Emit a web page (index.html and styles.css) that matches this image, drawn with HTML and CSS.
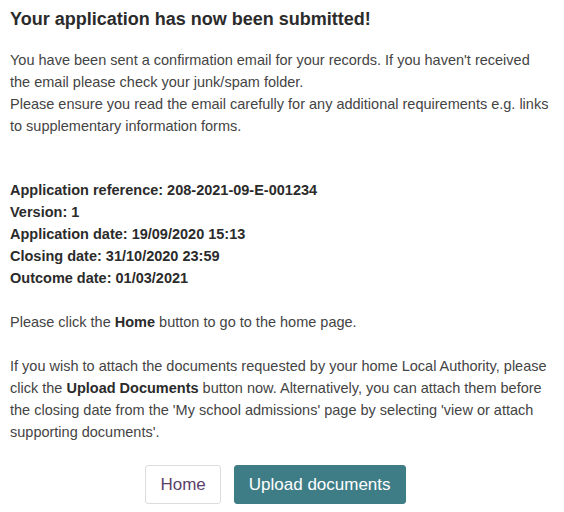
FILE: index.html
```html
<!DOCTYPE html>
<html>
<head>
<meta charset="utf-8">
<link rel="stylesheet" href="styles.css">
</head>
<body>
<div class="page">
  <h1 class="title">Your application has now been submitted!</h1>
  <p class="text">You have been sent a confirmation email for your records. If you haven't received the email please check your junk/spam folder.<br>Please ensure you read the email carefully for any additional requirements e.g. links to supplementary information forms.</p>
  <div class="details">
    <div>Application reference: 208-2021-09-E-001234</div>
    <div>Version: 1</div>
    <div>Application date: 19/09/2020 15:13</div>
    <div>Closing date: 31/10/2020 23:59</div>
    <div>Outcome date: 01/03/2021</div>
  </div>
  <p class="text">Please click the <b>Home</b> button to go to the home page.</p>
  <p class="text">If you wish to attach the documents requested by your home Local Authority, please click the <b>Upload Documents</b> button now. Alternatively, you can attach them before the closing date from the 'My school admissions' page by selecting 'view or attach supporting documents'.</p>
  <div class="actions">
    <button class="btn btn-home">Home</button>
    <button class="btn btn-upload">Upload documents</button>
  </div>
</div>
</body>
</html>
```

FILE: styles.css
```css
html, body {
  margin: 0;
  padding: 0;
  background: #fff;
}
.page {
  padding: 8px 14px 0 10px;
  font-family: "Liberation Sans", Arial, sans-serif;
  color: #444;
  font-size: 14.5px;
  line-height: 22px;
}
.title {
  margin: 0 0 19px 0;
  font-size: 18px;
  line-height: 22px;
  font-weight: bold;
  color: #2b2b2b;
}
.text {
  margin: 0 0 22px 0;
}
.text b {
  color: #2b2b2b;
}
.details {
  margin: 42px 0 22px 0;
  font-weight: bold;
  color: #2b2b2b;
}
.actions {
  display: flex;
  justify-content: center;
  gap: 13px;
  margin-top: 8px;
  padding-right: 9px;
}
.btn {
  font-family: "Liberation Sans", Arial, sans-serif;
  font-size: 17px;
  height: 39px;
  padding: 0 14px;
  border-radius: 3px;
  cursor: pointer;
}
.btn-home {
  background: #fff;
  border: 1px solid #dcdcdc;
  color: #5b3f6b;
}
.btn-upload {
  background: #3e7d86;
  border: 1px solid #3e7d86;
  color: #fff;
}
```
